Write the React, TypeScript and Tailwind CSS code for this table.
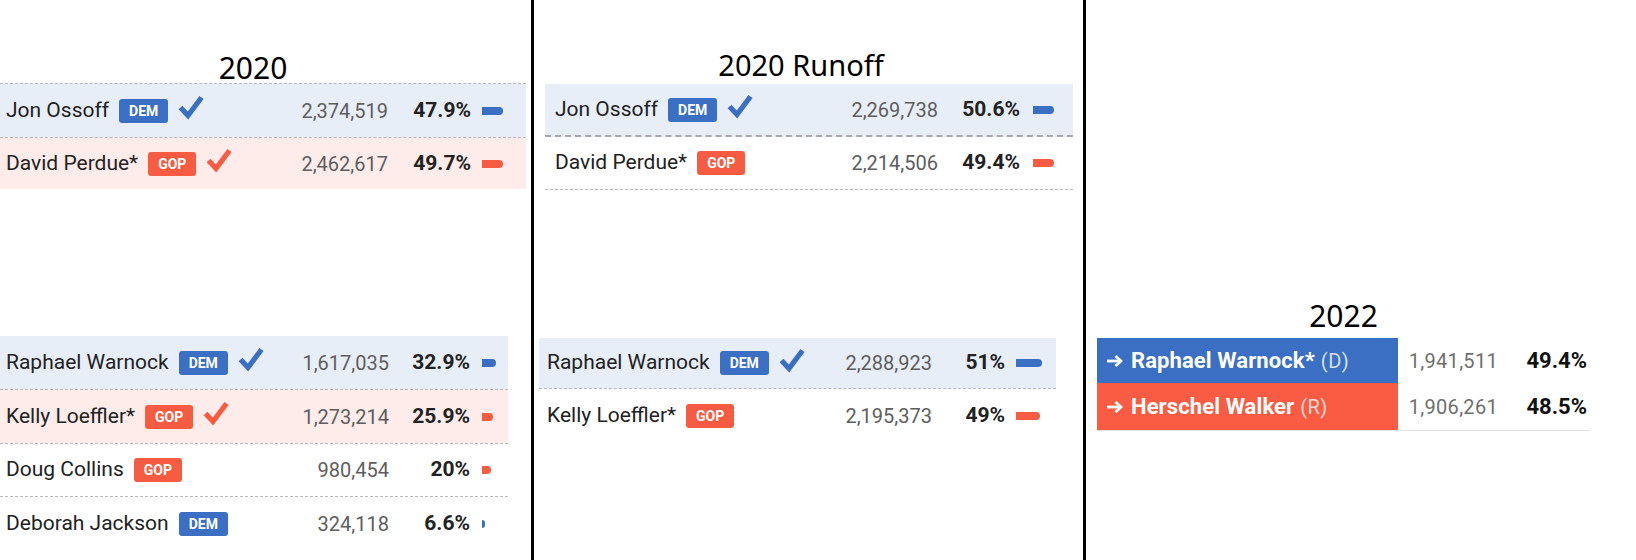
import React from "react";

type Party = "DEM" | "GOP";

interface Candidate {
  name: string;
  party: Party;
  votes: string;
  pct: string;
  bar: number;
  win?: boolean;
  rowClass: string;
}

interface Layout {
  name: string;
  votes: string;
  pct: string;
  bar: string;
}

const blue = "#3a6fc3";
const red = "#f75c43";

const Check = ({ party }: { party: Party }) => (
  <svg width="26" height="25" viewBox="0 0 26 25" className="shrink-0 -translate-y-[3px]">
    <path
      d="M2.5 12.5 L10 20.5 L23.5 2.5"
      fill="none"
      stroke={party === "DEM" ? blue : red}
      strokeWidth="5.2"
      strokeLinejoin="miter"
    />
  </svg>
);

const Badge = ({ party }: { party: Party }) => (
  <span
    className={
      "inline-flex h-[24px] items-center rounded-[3px] px-[10px] text-[14px] font-bold leading-none text-white " +
      (party === "DEM" ? "bg-[#3a6fc3]" : "bg-[#f75c43]")
    }
  >
    {party}
  </span>
);

const ResultRow = ({ c, layout }: { c: Candidate; layout: Layout }) => (
  <div className={"flex items-center " + c.rowClass}>
    <div className={"flex min-w-0 flex-1 items-center " + layout.name}>
      <span className="mr-[10px] whitespace-nowrap text-[21px] text-[#222]">{c.name}</span>
      <Badge party={c.party} />
      {c.win && (
        <span className="ml-[10px]">
          <Check party={c.party} />
        </span>
      )}
    </div>
    <div className={"text-right text-[20px] text-[#5e5e5e] " + layout.votes}>{c.votes}</div>
    <div className={"text-right text-[21px] font-bold text-[#222] " + layout.pct}>{c.pct}</div>
    <div className={"flex items-center " + layout.bar}>
      <div
        className={"h-[8px] rounded-r-full " + (c.party === "DEM" ? "bg-[#3a6fc3]" : "bg-[#f75c43]")}
        style={{ width: c.bar }}
      />
    </div>
  </div>
);

const dashTop = "border-t border-dashed border-[#b9b9b9]";

const general2020: Candidate[] = [
  { name: "Jon Ossoff", party: "DEM", votes: "2,374,519", pct: "47.9%", bar: 21, win: true, rowClass: "h-[54px] bg-[#e8eef8] " + dashTop },
  { name: "David Perdue*", party: "GOP", votes: "2,462,617", pct: "49.7%", bar: 21, win: true, rowClass: "h-[52px] bg-[#fdecea] " + dashTop },
];

const special2020: Candidate[] = [
  { name: "Raphael Warnock", party: "DEM", votes: "1,617,035", pct: "32.9%", bar: 14, win: true, rowClass: "h-[53px] bg-[#e8eef8]" },
  { name: "Kelly Loeffler*", party: "GOP", votes: "1,273,214", pct: "25.9%", bar: 11, win: true, rowClass: "h-[54px] bg-[#fdecea] " + dashTop },
  { name: "Doug Collins", party: "GOP", votes: "980,454", pct: "20%", bar: 9, rowClass: "h-[53px] " + dashTop },
  { name: "Deborah Jackson", party: "DEM", votes: "324,118", pct: "6.6%", bar: 3, rowClass: "h-[54px] " + dashTop },
];

const runoffSenate: Candidate[] = [
  { name: "Jon Ossoff", party: "DEM", votes: "2,269,738", pct: "50.6%", bar: 21, win: true, rowClass: "h-[53px] bg-[#e8eef8] border-b-2 border-dashed border-[#a9a9a9]" },
  { name: "David Perdue*", party: "GOP", votes: "2,214,506", pct: "49.4%", bar: 21, rowClass: "h-[53px] border-b border-dashed border-[#b9b9b9]" },
];

const runoffSpecial: Candidate[] = [
  { name: "Raphael Warnock", party: "DEM", votes: "2,288,923", pct: "51%", bar: 26, win: true, rowClass: "h-[51px] bg-[#e8eef8] border-b border-dashed border-[#b9b9b9]" },
  { name: "Kelly Loeffler*", party: "GOP", votes: "2,195,373", pct: "49%", bar: 24, rowClass: "h-[54px]" },
];

const upperLeft: Layout = { name: "pl-[6px]", votes: "w-[100px]", pct: "w-[83px]", bar: "w-[55px] pl-[11px]" };
const lowerLeft: Layout = { name: "pl-[6px]", votes: "w-[100px]", pct: "w-[81px]", bar: "w-[38px] pl-[12px]" };
const upperRunoff: Layout = { name: "pl-[10px]", votes: "w-[100px]", pct: "w-[82px]", bar: "w-[53px] pl-[13px]" };
const lowerRunoff: Layout = { name: "pl-[8px]", votes: "w-[100px]", pct: "w-[73px]", bar: "w-[51px] pl-[11px]" };

const Title = ({ children, className }: { children: React.ReactNode; className: string }) => (
  <div className={"text-center font-['Noto_Sans',sans-serif] leading-[30px] text-black " + className}>{children}</div>
);

const Arrow = () => (
  <svg width="16" height="12" viewBox="0 0 16 12" className="mr-[8px] shrink-0">
    <path d="M0 6 H13" stroke="white" strokeWidth="2.8" />
    <path d="M8.5 1 L14 6 L8.5 11" fill="none" stroke="white" strokeWidth="2.8" />
  </svg>
);

const Row2022 = ({
  name,
  tag,
  votes,
  pct,
  cellClass,
  tagClass,
  rowClass,
}: {
  name: string;
  tag: string;
  votes: string;
  pct: string;
  cellClass: string;
  tagClass: string;
  rowClass: string;
}) => (
  <div className={"flex items-center " + rowClass}>
    <div className={"flex h-full w-[301px] items-center pl-[10px] text-white " + cellClass}>
      <Arrow />
      <span className="whitespace-nowrap text-[22px] font-bold tracking-[0.1px]">{name}</span>
      <span className={"ml-[6px] text-[20px] tracking-[0.5px] " + tagClass}>{tag}</span>
    </div>
    <div className="w-[100px] text-right text-[20px] tracking-[0.3px] text-[#6f6f6f]">{votes}</div>
    <div className="w-[89px] text-right text-[22px] font-bold text-[#111]">{pct}</div>
  </div>
);

export default function App() {
  return (
    <div className="flex h-[560px] w-[1636px] overflow-hidden bg-white font-['Roboto',sans-serif]">
      {/* 2020 general */}
      <div className="w-[531px] shrink-0">
        <Title className="w-[506px] pt-[53px] text-[30px]">2020</Title>
        <div className="w-[526px]">
          {general2020.map((c) => (
            <ResultRow key={c.name} c={c} layout={upperLeft} />
          ))}
        </div>
        <div className="mt-[147px] w-[508px]">
          {special2020.map((c) => (
            <ResultRow key={c.name} c={c} layout={lowerLeft} />
          ))}
        </div>
      </div>

      <div className="w-[3px] shrink-0 bg-black" />

      {/* 2020 runoff */}
      <div className="w-[549px] shrink-0">
        <Title className="mb-[4px] ml-[11px] w-[512px] pt-[50px] text-[29px] leading-[28px]">2020 Runoff</Title>
        <div className="ml-[11px] w-[528px]">
          {runoffSenate.map((c) => (
            <ResultRow key={c.name} c={c} layout={upperRunoff} />
          ))}
        </div>
        <div className="ml-[5px] mt-[148px] w-[517px]">
          {runoffSpecial.map((c) => (
            <ResultRow key={c.name} c={c} layout={lowerRunoff} />
          ))}
        </div>
      </div>

      <div className="w-[3px] shrink-0 bg-black" />

      {/* 2022 */}
      <div className="flex-1 pl-[11px]">
        <Title className="w-[493px] pt-[301px] text-[30px]">2022</Title>
        <div className="mt-[7px] w-[493px]">
          <Row2022
            name="Raphael Warnock*"
            tag="(D)"
            votes="1,941,511"
            pct="49.4%"
            cellClass="bg-[#3a6fc3]"
            tagClass="text-[#d6e0f3]"
            rowClass="h-[45px]"
          />
          <Row2022
            name="Herschel Walker"
            tag="(R)"
            votes="1,906,261"
            pct="48.5%"
            cellClass="bg-[#f95c42]"
            tagClass="text-[#ffd9d2]"
            rowClass="h-[48px] border-b border-[#e3e3e3]"
          />
        </div>
      </div>
    </div>
  );
}
